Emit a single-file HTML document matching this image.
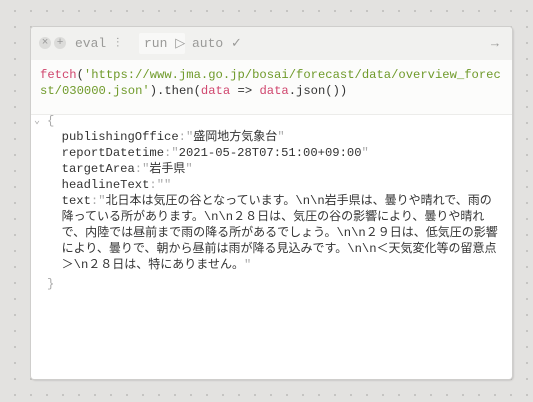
<!DOCTYPE html>
<html><head><style>
html,body{margin:0;padding:0}
body{width:533px;height:402px;background-color:#e3e2e0;background-image:radial-gradient(circle,#9e9d9b 0.6px,transparent 0.9px);background-size:16px 16px;background-position:7px 3px;position:relative;overflow:hidden;font-family:"Liberation Mono","Noto Sans CJK JP",monospace}
.card{position:absolute;left:31px;top:27px;width:481px;height:352px;background:#fff;border-radius:3px;box-shadow:0 0 0 1px #cfcecc,1px 1px 2px rgba(0,0,0,.25);overflow:hidden}
.hdr{height:33px;background:#f1f1ef;position:relative;font-size:13px;color:#9a9a98}
.hdr span{position:absolute;top:9px;line-height:16px;height:16px}
.circ{position:absolute;top:10px;width:12px;height:12px;border-radius:50%;background:#dcdcda;color:#999;font-size:11px;line-height:12px;text-align:center}
.run{position:absolute;left:108px;top:6px;width:46px;height:21px;background:#f8f8f7;border-radius:2px}
.code{height:47px;background:#fcfcfb;border-bottom:1px solid #ececea;font-size:12.2px;line-height:16px;padding:7px 0 0 9px;white-space:pre;color:#333}
.f{color:#d0466e}.s{color:#6f9a2a}
.out{position:relative;font-size:12.2px;line-height:16px;white-space:pre;color:#333;padding:0 0 0 16px;margin-top:-2px}
.q{color:#aaa}
.j{font-family:"Liberation Sans","Noto Sans CJK JP",sans-serif;font-size:12px;line-height:1}
</style></head><body>
<div class="card">
 <div class="hdr">
  <div class="circ" style="left:8px">×</div>
  <div class="circ" style="left:23px">+</div>
  <span style="left:44px">eval</span>
  <span style="left:85px;font-size:13px">⫶</span>
  <div class="run"></div>
  <span style="left:113px">run <span style="position:static;font-family:'DejaVu Sans'">▷</span></span>
  <span style="left:161px">auto <span style="position:static;font-family:'DejaVu Sans'">✓</span></span>
  <span style="left:460px;font-size:13px">→</span>
 </div>
 <div class="code"><span class="f">fetch</span>(<span class="s">'https://www.jma.go.jp/bosai/forecast/data/overview_forec
st/030000.json'</span>).then(<span class="f">data</span> => <span class="f">data</span>.json())</div>
 <div class="out"><span class="q" style="position:absolute;left:3px;top:1px;font-size:10px">⌄</span><span class="q">{</span>
  publishingOffice<span class="q">:"</span><span class="j">盛岡地方気象台</span><span class="q">"</span>
  reportDatetime<span class="q">:"</span>2021-05-28T07:51:00+09:00<span class="q">"</span>
  targetArea<span class="q">:"</span><span class="j">岩手県</span><span class="q">"</span>
  headlineText<span class="q">:""</span>
  text<span class="q">:"</span><span class="j">北日本は気圧の谷となっています。</span>\n\n<span class="j">岩手県は、曇りや晴れで、雨の</span>
  <span class="j">降っている所があります。</span>\n\n<span class="j">２８日は、気圧の谷の影響により、曇りや晴れ</span>
  <span class="j">で、内陸では昼前まで雨の降る所があるでしょう。</span>\n\n<span class="j">２９日は、低気圧の影響</span>
  <span class="j">により、曇りで、朝から昼前は雨が降る見込みです。</span>\n\n<span class="j">＜天気変化等の留意点</span>
  <span class="j">＞</span>\n<span class="j">２８日は、特にありません。</span><span class="q">"</span>
<span class="q" style="display:inline-block;margin-top:3px">}</span></div>
</div>
</body></html>
